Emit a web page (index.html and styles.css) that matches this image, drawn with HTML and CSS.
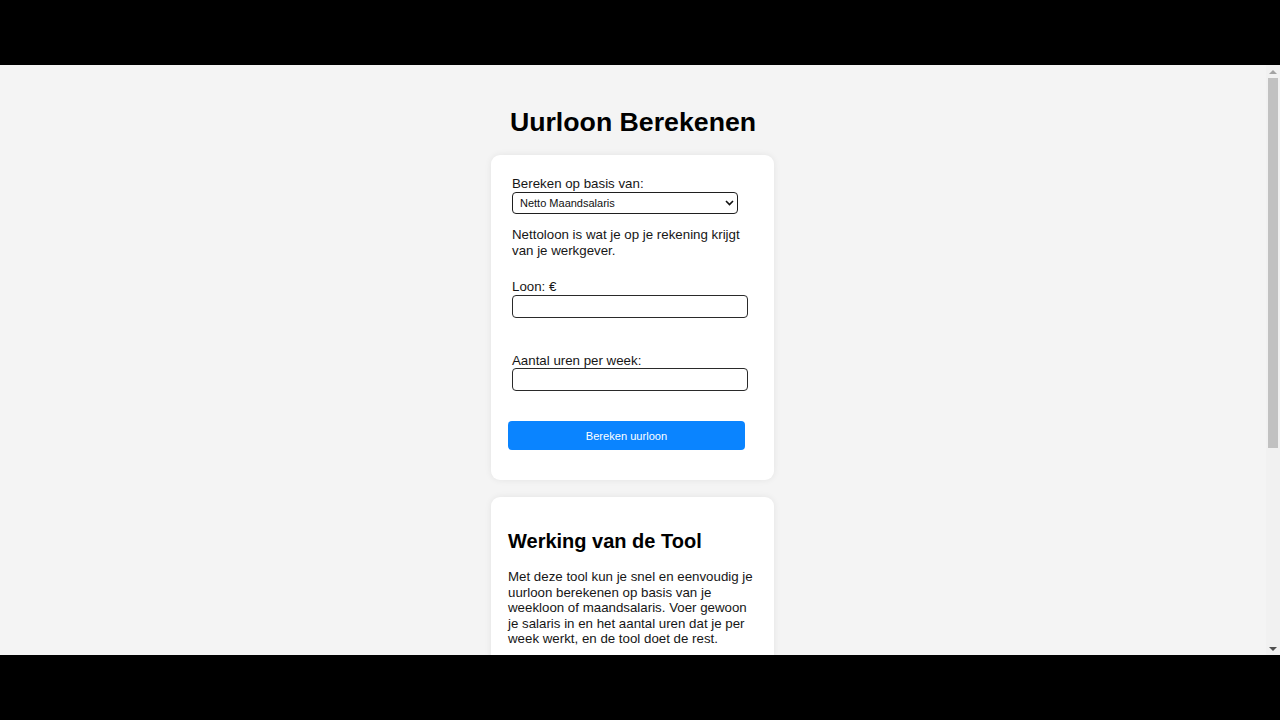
FILE: index.html
```html
<!DOCTYPE html>
<html lang="nl">
<head>
<meta charset="utf-8">
<title>Uurloon Berekenen</title>
<link rel="stylesheet" href="styles.css">
</head>
<body>
<div class="frame">
  <div class="bar"></div>
  <div class="viewport">
    <main class="page">
      <h1 class="title">Uurloon Berekenen</h1>
      <section class="card form-card">
        <div class="group">
          <label class="label label-basis" for="basis">Bereken op basis van:</label>
          <div class="select-wrap">
            <select id="basis" class="select">
              <option>Netto Maandsalaris</option>
            </select>
            <svg class="chevron" width="9" height="6" viewBox="0 0 9 6"><path d="M1 1 L4.5 4.5 L8 1" fill="none" stroke="#111" stroke-width="1.6"/></svg>
          </div>
          <p class="note">Nettoloon is wat je op je rekening krijgt van je werkgever.</p>
        </div>
        <div class="group group-loon">
          <label class="label" for="loon">Loon: €</label>
          <input id="loon" class="input" type="text">
        </div>
        <div class="group group-uren">
          <label class="label" for="uren">Aantal uren per week:</label>
          <input id="uren" class="input" type="text">
        </div>
        <button class="btn">Bereken uurloon</button>
      </section>
      <section class="card info-card">
        <h2 class="subtitle">Werking van de Tool</h2>
        <p class="body-text">Met deze tool kun je snel en eenvoudig je uurloon berekenen op basis van je weekloon of maandsalaris. Voer gewoon je salaris in en het aantal uren dat je per week werkt, en de tool doet de rest.</p>
      </section>
    </main>
    <div class="scrollbar">
      <div class="arrow arrow-up"></div>
      <div class="track"><div class="thumb"></div></div>
      <div class="arrow arrow-down"></div>
    </div>
  </div>
  <div class="bar"></div>
</div>
</body>
</html>
```
FILE: styles.css
```css
* { box-sizing: border-box; }
html, body { margin: 0; padding: 0; }
body {
  background: #000;
  font-family: "Liberation Sans", Arial, sans-serif;
  color: #161616;
}
.frame {
  width: 1280px;
  height: 720px;
  display: flex;
  flex-direction: column;
}
.bar { height: 65px; background: #000; flex: none; }
.viewport {
  height: 590px;
  display: flex;
  flex: none;
}
.page {
  flex: 1;
  background: #f4f4f4;
  overflow: hidden;
  display: flex;
  flex-direction: column;
  align-items: center;
  padding-top: 24px;
}
.title {
  font-size: 26.7px;
  font-weight: bold;
  color: #000;
  margin: 18px 0 17px;
  line-height: 30.7px;
}
.card {
  width: 283px;
  margin-right: 1px;
  background: #fff;
  border-radius: 9px;
  box-shadow: 0 0 7px rgba(0,0,0,0.07);
  padding: 17px;
  flex: none;
}
.form-card {
  padding-top: 21px;
  padding-bottom: 30px;
}
.group { padding-left: 4px; }
.label {
  display: block;
  font-size: 13.3px;
  line-height: 15.5px;
  margin-bottom: 0;
}
.label-basis { margin-bottom: 1px; }
.select-wrap {
  position: relative;
  width: 226px;
}
.select {
  appearance: none;
  -webkit-appearance: none;
  width: 226px;
  height: 22px;
  border: 1.5px solid #1f1f1f;
  border-radius: 4px;
  background: #fff;
  font-family: "Liberation Sans", Arial, sans-serif;
  font-size: 11px;
  color: #111;
  padding: 0 0 0 7px;
  margin: 0;
  display: block;
}
.chevron {
  position: absolute;
  right: 4px;
  top: 8px;
}
.note {
  font-size: 13.3px;
  line-height: 15.5px;
  margin: 13px 0 0;
  width: 240px;
}
.group-loon { margin-top: 21px; }
.group-uren { margin-top: 35px; }
.input {
  display: block;
  width: 236px;
  height: 23px;
  border: 1.5px solid #2a2a2a;
  border-radius: 4px;
  background: #fff;
  margin: 0;
  padding: 0 4px;
}
.btn {
  display: block;
  margin-top: 30px;
  width: 237px;
  height: 29px;
  border: none;
  border-radius: 4px;
  background: #0a84ff;
  color: #fff;
  font-family: "Liberation Sans", Arial, sans-serif;
  font-size: 11.1px;
  padding: 0;
}
.info-card {
  margin-top: 17px;
  padding-bottom: 20px;
}
.subtitle {
  font-size: 20px;
  font-weight: bold;
  color: #000;
  line-height: 23px;
  margin: 16px 0 16px;
}
.body-text {
  font-size: 13.3px;
  line-height: 15.5px;
  margin: 0;
}
.scrollbar {
  width: 14px;
  flex: none;
  background: #f1f1f1;
  display: flex;
  flex-direction: column;
}
.arrow {
  height: 13px;
  flex: none;
  display: flex;
  align-items: center;
  justify-content: center;
}
.arrow-up::before {
  content: "";
  border-left: 4px solid transparent;
  border-right: 4px solid transparent;
  border-bottom: 4px solid #a3a3a3;
}
.arrow-down::before {
  content: "";
  border-left: 4px solid transparent;
  border-right: 4px solid transparent;
  border-top: 4px solid #505050;
}
.track {
  flex: 1;
  padding: 0 2px;
}
.thumb {
  height: 370px;
  background: #c1c1c1;
}
```
